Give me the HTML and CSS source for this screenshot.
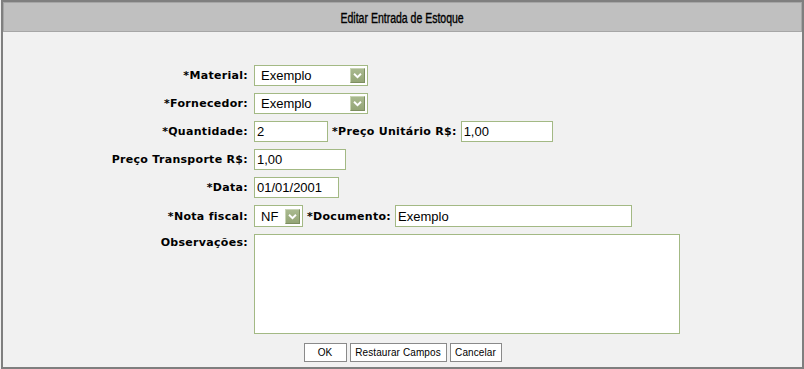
FILE: index.html
```html
<!DOCTYPE html>
<html lang="pt">
<head>
<meta charset="utf-8">
<title>Editar Entrada de Estoque</title>
<link rel="stylesheet" href="styles.css">
</head>
<body>
<div class="frame">
  <div class="header"><span class="title">Editar Entrada de Estoque</span></div>
  <div class="content">
    <div class="form">
      <label class="lbl">*Material:</label>
      <div class="field">
        <div class="select w-material"><span class="sel-text">Exemplo</span><span class="arrow"><svg viewBox="0 0 15 15" width="15" height="15"><path d="M3.5 5.5 L7.5 9.5 L11.5 5.5" fill="none" stroke="#fff" stroke-width="2.2"/></svg></span></div>
      </div>

      <label class="lbl">*Fornecedor:</label>
      <div class="field">
        <div class="select w-material"><span class="sel-text">Exemplo</span><span class="arrow"><svg viewBox="0 0 15 15" width="15" height="15"><path d="M3.5 5.5 L7.5 9.5 L11.5 5.5" fill="none" stroke="#fff" stroke-width="2.2"/></svg></span></div>
      </div>

      <label class="lbl">*Quantidade:</label>
      <div class="field">
        <input class="inp w-qtd" type="text" value="2">
        <label class="lbl inline">*Preço Unitário R$:</label>
        <input class="inp w-preco" type="text" value="1,00">
      </div>

      <label class="lbl">Preço Transporte R$:</label>
      <div class="field">
        <input class="inp w-preco" type="text" value="1,00">
      </div>

      <label class="lbl">*Data:</label>
      <div class="field">
        <input class="inp w-data" type="text" value="01/01/2001">
      </div>

      <label class="lbl">*Nota fiscal:</label>
      <div class="field tall">
        <div class="select w-nf"><span class="sel-text">NF</span><span class="arrow"><svg viewBox="0 0 15 15" width="15" height="15"><path d="M3.5 5.5 L7.5 9.5 L11.5 5.5" fill="none" stroke="#fff" stroke-width="2.2"/></svg></span></div>
        <label class="lbl inline">*Documento:</label>
        <input class="inp w-doc" type="text" value="Exemplo">
      </div>

      <label class="lbl top">Observações:</label>
      <div class="field area-field">
        <textarea class="area"></textarea>
      </div>
    </div>
    <div class="buttons">
      <button class="btn w-ok">OK</button>
      <button class="btn w-rest">Restaurar Campos</button>
      <button class="btn w-canc">Cancelar</button>
    </div>
  </div>
</div>
</body>
</html>
```

FILE: styles.css
```css
* { box-sizing: border-box; }

html, body {
  margin: 0;
  padding: 0;
  background: #f1f1f1;
}

.frame {
  margin-left: 1px;
  width: 803px;
  height: 369px;
  border: 2px solid #7f7f7f;
  background: #f1f1f1;
  display: flex;
  flex-direction: column;
}

.header {
  height: 30px;
  background: #c0c0c0;
  border: 1px solid #a6a6a6;
  display: flex;
  align-items: center;
  justify-content: center;
  padding-top: 1px;
}

.title {
  display: inline-block;
  font-family: "Liberation Sans", Arial, sans-serif;
  font-size: 14px;
  color: #000;
  transform: scaleX(0.75);
  -webkit-text-stroke: 0.35px #000;
}

.content {
  padding-top: 33px;
}

.form {
  display: grid;
  grid-template-columns: 245px 1fr;
  column-gap: 6px;
  row-gap: 7px;
}

.lbl {
  font-family: "DejaVu Sans", Verdana, sans-serif;
  font-weight: bold;
  font-size: 11px;
  letter-spacing: 0.3px;
  color: #000;
  text-align: right;
  align-self: center;
  white-space: nowrap;
}

.lbl.inline {
  margin: 0 4px 0 4px;
}

.lbl.top {
  align-self: start;
  padding-top: 2px;
}

.field {
  display: flex;
  align-items: center;
  height: 21px;
}

.field.tall { height: 22px; }

.field.area-field { height: 100px; }

.inp {
  height: 21px;
  border: 1px solid #a3b984;
  background: #fff;
  padding: 0 2px;
  margin: 0;
  font-family: "Liberation Sans", Arial, sans-serif;
  font-size: 13px;
  color: #000;
  outline: none;
}

.field.tall .inp { height: 22px; }

.w-qtd { width: 74px; }
.w-preco { width: 92px; }
.w-data { width: 85px; }
.w-doc { width: 237px; }

.select {
  height: 21px;
  border: 1px solid #a3b984;
  background: #fff;
  display: flex;
  align-items: center;
  justify-content: space-between;
  padding: 0 2px 0 6px;
  font-family: "Liberation Sans", Arial, sans-serif;
  font-size: 13px;
  color: #000;
}

.field.tall .select { height: 22px; }

.w-material { width: 114px; }
.w-nf { width: 49px; }

.arrow {
  width: 15px;
  height: 15px;
  display: flex;
  background: linear-gradient(#a9b98f, #94a576);
  border: 1px solid;
  border-color: #c8d4b4 #7d8e60 #7d8e60 #c8d4b4;
}

.arrow svg {
  width: 13px;
  height: 13px;
}

.area {
  width: 426px;
  height: 100px;
  border: 1px solid #a3b984;
  background: #fff;
  margin: 0;
  padding: 2px;
  resize: none;
  outline: none;
}

.buttons {
  display: flex;
  justify-content: center;
  gap: 3px;
  margin-top: 9px;
}

.btn {
  height: 19px;
  background: #fff;
  border: 1px solid #8a8a8a;
  border-radius: 0;
  padding: 0;
  margin: 0;
  font-family: "Liberation Sans", Arial, sans-serif;
  font-size: 10px;
  letter-spacing: 0.1px;
  color: #000;
}

.w-ok { width: 43px; }
.w-rest { width: 97px; }
.w-canc { width: 52px; }
```
